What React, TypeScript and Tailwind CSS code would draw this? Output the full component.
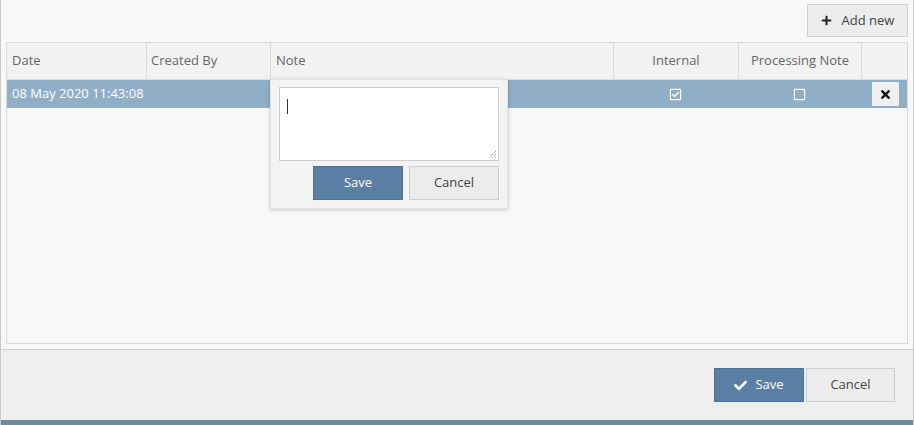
import React from "react";
import { FaPlus, FaCheck, FaTimes, FaRegSquare, FaRegCheckSquare } from "react-icons/fa";

export default function App() {
  const font = { fontFamily: '"Open Sans", "Noto Sans", sans-serif' };
  return (
    <div
      className="relative w-[914px] h-[425px] flex flex-col overflow-hidden border-x border-[#c9c9c9] bg-[#f8f8f8] text-[13px] text-[#555]"
      style={font}
    >
      <div className="flex-1 flex flex-col pl-[5px] pr-[5px]">
        <div className="flex justify-end pt-[4px] pb-[5px]">
          <button className="h-[33px] w-[101px] flex items-center justify-center gap-[10px] bg-[#ececec] border border-[#d0d0d0] text-[#444] text-[13px]">
            <FaPlus className="text-[#222] w-[11px] h-[11px]" />
            <span>Add new</span>
          </button>
        </div>
        <div className="h-[302px] border border-[#d8d8d8] bg-[#f8f8f8] flex flex-col">
          <div className="flex h-[37px] bg-[#f2f2f2] border-b border-[#dcdcdc] text-[#666]">
            <div className="w-[140px] border-r border-[#d8d8d8] flex items-center pl-[5px]">Date</div>
            <div className="w-[124px] border-r border-[#d8d8d8] flex items-center pl-[4px]">Created By</div>
            <div className="w-[343px] border-r border-[#d8d8d8] flex items-center pl-[5px]">Note</div>
            <div className="w-[125px] border-r border-[#d8d8d8] flex items-center justify-center">Internal</div>
            <div className="w-[123px] border-r border-[#d8d8d8] flex items-center justify-center">Processing Note</div>
            <div className="flex-1"></div>
          </div>
          <div className="flex h-[28px] bg-[#91aec7] text-white items-center">
            <div className="w-[140px] pl-[5px] whitespace-nowrap">08 May 2020 11:43:08</div>
            <div className="w-[124px]"></div>
            <div className="w-[343px]"></div>
            <div className="w-[125px] flex justify-center pr-[3px]">
              <FaRegCheckSquare className="w-[13px] h-[13px]" />
            </div>
            <div className="w-[123px] flex justify-center pr-[2px]">
              <FaRegSquare className="w-[13px] h-[13px]" />
            </div>
            <div className="flex-1 flex justify-end pr-[8px]">
              <div className="w-[27px] h-[24px] bg-[#f0f0f0] flex items-center justify-center">
                <FaTimes className="text-[#111] w-[13px] h-[13px]" />
              </div>
            </div>
          </div>
        </div>
      </div>
      <div className="h-[71px] bg-[#efefef] border-t border-[#cfcfcf] flex justify-end items-start pt-[18px] pr-[18px] gap-[2px]">
        <button className="h-[34px] w-[90px] flex items-center justify-center gap-[8px] bg-[#5b7ea5] border border-[#4f7096] text-white text-[13px]">
          <FaCheck className="w-[13px] h-[13px]" />
          <span>Save</span>
        </button>
        <button className="h-[34px] w-[89px] flex items-center justify-center bg-[#ececec] border border-[#cfcfcf] text-[#444] text-[13px]">
          Cancel
        </button>
      </div>
      <div className="h-[5px] bg-[#6e8b9b]"></div>

      <div className="absolute left-[269px] top-[79px] w-[238px] h-[130px] bg-[#f3f3f3] border border-[#e2e2e2] shadow-[0_1px_4px_rgba(0,0,0,0.2)] px-[8px] pt-[7px]">
        <div className="relative h-[74px] bg-white border border-[#cccccc]">
          <div className="absolute left-[7px] top-[11px] w-[1px] h-[15px] bg-[#333]"></div>
          <svg className="absolute right-[1px] bottom-[1px]" width="10" height="10" viewBox="0 0 10 10">
            <path d="M9 2 L2 9 M9 5 L5 9 M9 8 L8 9" stroke="#777" strokeWidth="1" strokeDasharray="1 1" />
          </svg>
        </div>
        <div className="flex justify-end gap-[6px] mt-[5px]">
          <button className="h-[34px] w-[90px] bg-[#5b7ea5] border border-[#4f7096] text-white text-[13px]">Save</button>
          <button className="h-[34px] w-[90px] bg-[#ececec] border border-[#cfcfcf] text-[#444] text-[13px]">Cancel</button>
        </div>
      </div>
    </div>
  );
}
